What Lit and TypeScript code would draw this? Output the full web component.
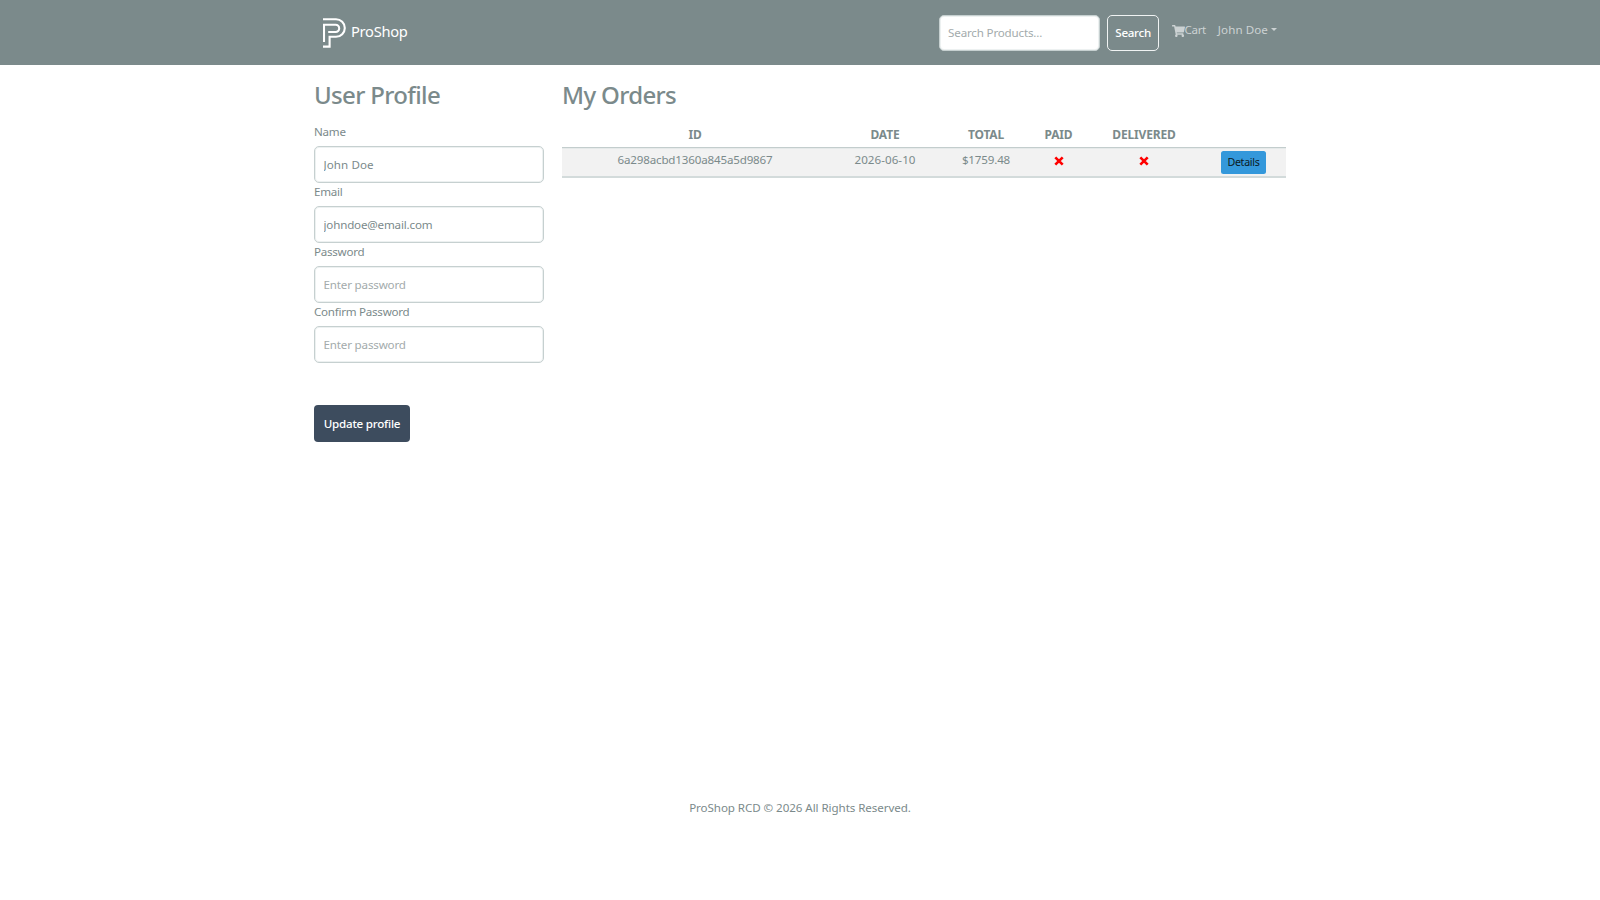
import { LitElement, html, css } from "lit";

const cross = () => html`<svg class="cross" viewBox="0 0 10 10" width="10" height="10">
  <path d="M1.3 1.3 L8.7 8.7 M8.7 1.3 L1.3 8.7" stroke="#f00" stroke-width="2.6" fill="none" /></svg>`;

const fields = [
  { label: "Name", value: "John Doe", hint: "Enter name", type: "text", cls: "short" },
  { label: "Email", value: "johndoe@email.com", hint: "Enter email", type: "text", cls: "" },
  { label: "Password", value: "", hint: "Enter password", type: "password", cls: "" },
  { label: "Confirm Password", value: "", hint: "Enter password", type: "password", cls: "" },
];

class AppRoot extends LitElement {
  static styles = css`
    :host { display: block; height: 900px; overflow: hidden; background: #fff; color: #7b8a8b;
      font-family: "Noto Sans", "Open Sans", sans-serif; font-size: 11.6px; line-height: 17px; letter-spacing: -0.17px; }
    * { box-sizing: border-box; }
    header { height: 65px; background: #7b8a8b; }
    .container { width: 972px; margin: 0 auto; }
    .nav { display: flex; align-items: flex-start; padding: 15px 9px 0 9px; height: 65px; }
    .brand { display: flex; color: #fff; font-size: 14.7px; line-height: 20px; letter-spacing: -0.3px; }
    .brand svg { margin: 2px 5px 0 0; }
    .brand span { padding-top: 6px; }
    input { font: inherit; letter-spacing: inherit; color: #7b8a8b; display: block; border: 1px solid #c6d0d0;
      box-shadow: inset 0 0 0 1px #edf1f1; border-radius: 5px; height: 37px; padding: 0 9px 0 8.5px; background: #fff;
      outline: none; width: 100%; }
    input::placeholder { color: #a3abac; opacity: 1; }
    .search { width: 161px; height: 36px; margin-left: auto; padding: 0 9px 2px 8px; letter-spacing: -0.18px; }
    .go { width: 52px; height: 36px; margin-left: 7px; border: 1px solid #f0f3f3; border-radius: 5px; background: none;
      color: #fff; font: 500 11.6px "Noto Sans", sans-serif; letter-spacing: -0.28px; padding: 0 0 2px; }
    .link { display: flex; color: #ccd2d3; padding-top: 6px; }
    .cart { margin-left: 13px; letter-spacing: -0.4px; }
    .cart svg { margin: 4px -0.5px 0 0; }
    .user { margin-left: 12px; letter-spacing: 0.08px; }
    .caret { border: 3px solid transparent; border-top-color: #ccd2d3; border-bottom: 0; margin: 7px 0 0 3px; height: 0; }
    .main { display: flex; gap: 18px; }
    .profile { width: 230px; }
    .orders { width: 724px; }
    h2 { margin: 0; padding-top: 14px; font-size: 24px; line-height: 31px; font-weight: 500; letter-spacing: -0.65px; height: 58px; }
    label { display: block; height: 23px; letter-spacing: -0.26px; }
    .short { letter-spacing: 0.08px; }
    .update { margin-top: 42px; width: 96px; height: 37px; border: 0; border-radius: 4px; background: #3d4c5e; color: #fff;
      font: 500 11.6px "Noto Sans", sans-serif; letter-spacing: -0.23px; padding: 0 0 1px; display: block; }
    .row { display: grid; grid-template-columns: 266px 114px 88px 57px 114px 85px; text-align: center; }
    .head { font-weight: 700; font-size: 12px; letter-spacing: -0.15px; height: 24px; padding-top: 3px; }
    .body { height: 31px; background: #f2f2f2; border-top: 1px solid #c3cdcd; border-bottom: 2px solid #d3dbdb;
      box-shadow: inset 0 1px #e6eaea; padding-top: 3px; line-height: 18px; }
    .date { letter-spacing: 0.05px; }
    .cross { display: block; margin: 5px auto 0; }
    .details { width: 45px; height: 23px; border: 0; border-radius: 2.5px; background: #3498db; color: #0b1a25;
      font: 10.7px "Noto Sans", sans-serif; letter-spacing: -0.3px; padding: 0 0 1px; display: block; margin: 0 auto; }
    footer { text-align: center; padding-top: 357px; letter-spacing: -0.07px; }
  `;
  render() {
    return html`
      <header><div class="container nav">
        <div class="brand">
          <svg width="23" height="31" viewBox="0 0 23 31" fill="none" stroke="#fff" stroke-width="2.1">
            <path d="M0 2.2 H13 A8.3 8.3 0 0 1 13 19.8 H6.6 V29.6 H0" />
            <path d="M1 25 V7.8 H12.6 A3.6 3.6 0 0 1 12.6 15 H5.2" />
          </svg><span>ProShop</span>
        </div>
        <input class="search" placeholder="Search Products..." />
        <button class="go">Search</button>
        <div class="link cart">
          <svg width="13" height="12" viewBox="0 0 576 512" preserveAspectRatio="none" fill="#ccd2d3"><path d="M528.12 301.319l47.273-208C578.806 78.301 567.391 64 551.99 64H159.208l-9.166-44.81C147.758 8.021 137.93 0 126.529 0H24C10.745 0 0 10.745 0 24v16c0 13.255 10.745 24 24 24h69.883l70.248 343.435C147.325 417.1 136 435.222 136 456c0 30.928 25.072 56 56 56s56-25.072 56-56c0-15.674-6.447-29.835-16.824-40h209.647C430.447 426.165 424 440.326 424 456c0 30.928 25.072 56 56 56s56-25.072 56-56c0-22.172-12.888-41.332-31.579-50.405l5.517-24.276c3.413-15.018-8.002-29.319-23.403-29.319H218.117l-6.545-32h293.145c11.206 0 20.92-7.754 23.403-18.681z"/></svg>
          <span>Cart</span>
        </div>
        <div class="link user"><span>John Doe</span><i class="caret"></i></div>
      </div></header>
      <div class="container main">
        <section class="profile">
          <h2>User Profile</h2>
          ${fields.map((f) => html`<label>${f.label}</label>
            <input class=${f.cls} type=${f.type} placeholder=${f.hint} .value=${f.value} />`)}
          <button class="update">Update profile</button>
        </section>
        <section class="orders">
          <h2>My Orders</h2>
          <div class="row head"><span>ID</span><span>DATE</span><span>TOTAL</span><span>PAID</span><span>DELIVERED</span><span></span></div>
          <div class="row body"><span>6a298acbd1360a845a5d9867</span><span class="date">2026-06-10</span><span>$1759.48</span>
            ${cross()}${cross()}<button class="details">Details</button></div>
        </section>
      </div>
      <footer>ProShop RCD © 2026 All Rights Reserved.</footer>
    `;
  }
}
customElements.define("app-root", AppRoot);
